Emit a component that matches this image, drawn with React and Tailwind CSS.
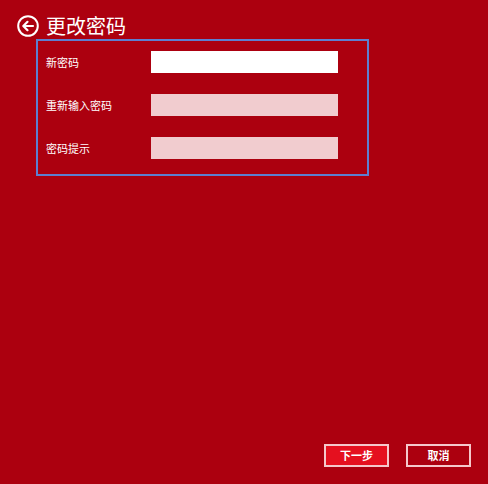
import React from 'react';

const font = { fontFamily: '"Noto Sans CJK SC", "Noto Sans", sans-serif' };

const Field = ({ label, active }) => (
  <div className="flex items-center h-[22px]">
    <span className="w-[105px] text-[11px] text-white leading-none">{label}</span>
    <div className={`w-[187px] h-[22px] ${active ? 'bg-white' : 'bg-[#f1cccf]'}`} />
  </div>
);

export default function App() {
  return (
    <div className="w-[488px] h-[484px] bg-[#ac000f] flex flex-col" style={font}>
      <div className="flex items-center pl-[17px] pt-[15px] h-[37px]">
        <svg width="22" height="22" viewBox="0 0 22 22" className="shrink-0">
          <circle cx="11" cy="11" r="9.8" fill="none" stroke="white" strokeWidth="2" />
          <path d="M16 11H6.5M10.5 6.8L6.3 11l4.2 4.2" fill="none" stroke="white" strokeWidth="2.2" strokeLinecap="round" strokeLinejoin="round" />
        </svg>
        <h1 className="ml-[7px] text-[20px] text-white leading-none">更改密码</h1>
      </div>
      <div className="ml-[36px] mt-[2px] w-[333px] h-[137px] border-2 border-[#5d7fd0] pl-[8px] pt-[10px] flex flex-col gap-[21px]">
        <Field label="新密码" active />
        <Field label="重新输入密码" />
        <Field label="密码提示" />
      </div>
      <div className="flex-1" />
      <div className="flex justify-end gap-[17px] pr-[17px] pb-[17px]">
        <button className="w-[65px] h-[23px] bg-[#e5101f] border-2 border-[#f5c8cb] text-white text-[11px] font-bold leading-none">下一步</button>
        <button className="w-[65px] h-[23px] bg-[#ac000f] border-2 border-[#f5c8cb] text-white text-[11px] font-bold leading-none">取消</button>
      </div>
    </div>
  );
}
